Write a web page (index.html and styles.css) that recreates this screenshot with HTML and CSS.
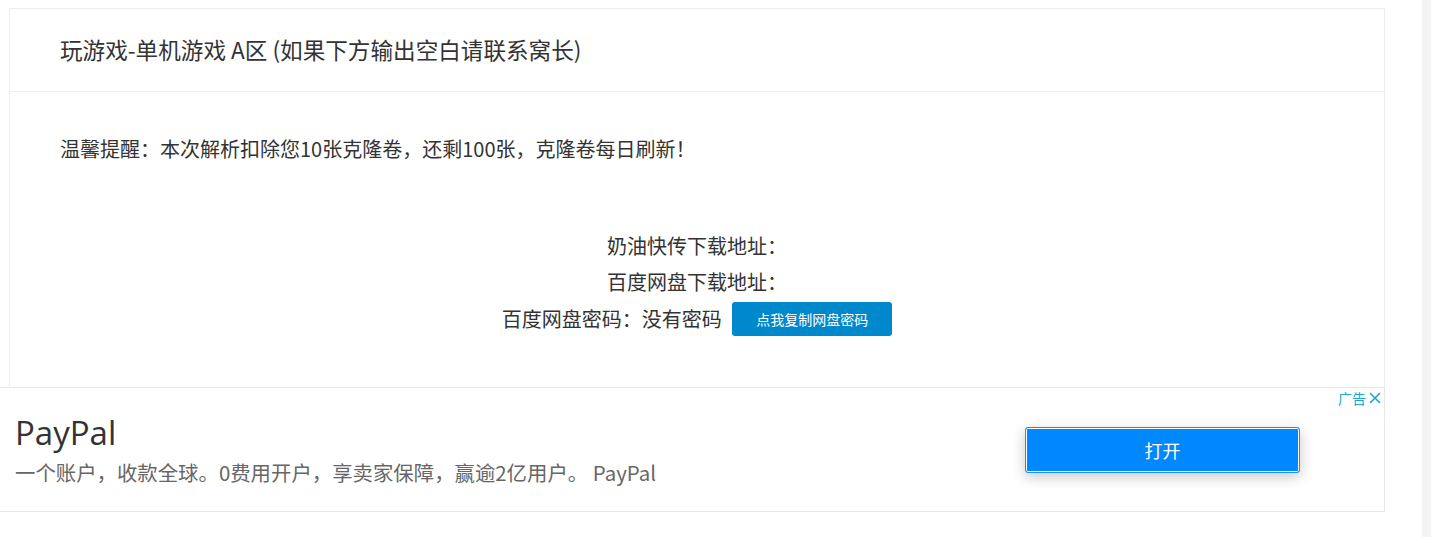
FILE: index.html
```html
<!DOCTYPE html>
<html lang="zh-CN">
  <head>
    <meta charset="UTF-8" />
    <meta name="viewport" content="width=device-width, initial-scale=1.0" />
    <title>玩游戏-单机游戏 A区</title>
    <link rel="stylesheet" href="styles.css">
  </head>

  <body>
    <div class="page">
      <div class="main">
        <div class="card">
          <div class="card-head">
            <h3 class="title">玩游戏-单机游戏 A区 (如果下方输出空白请联系窝长)</h3>
          </div>
          <div class="card-body">
            <p class="tip">温馨提醒：本次解析扣除您10张克隆卷，还剩100张，克隆卷每日刷新！</p>
            <div class="links">
              <div class="line">奶油快传下载地址：</div>
              <div class="line">百度网盘下载地址：</div>
              <div class="line">百度网盘密码：没有密码 <button class="copy">点我复制网盘密码</button></div>
            </div>
          </div>
        </div>

        <div class="ad">
          <div class="ad-text">
            <div class="ad-name">PayPal</div>
            <div class="ad-desc">一个账户，收款全球。0费用开户，享卖家保障，赢逾2亿用户。 PayPal</div>
          </div>
          <button class="ad-open">打开</button>
          <div class="ad-label">
            广告
            <svg width="12" height="12" viewBox="0 0 12 12">
              <path d="M1 1L11 11M11 1L1 11" stroke="currentColor" stroke-width="1.6" fill="none" />
            </svg>
          </div>
        </div>
      </div>
      <div class="gutter"></div>
    </div>
  </body>
</html>
```

FILE: styles.css
```css
body {
  margin: 0;
  font-family: "Noto Sans CJK SC", "Noto Sans", sans-serif;
  color: #333;
  background: #fff;
}

.page {
  display: flex;
  min-height: 100vh;
}

.main {
  width: 1385px;
  padding-top: 8px;
}

.gutter {
  width: 9px;
  margin-left: auto;
  background-color: #f4f4f4;
}

.card {
  margin-left: 9px;
  border: 1px solid #eee;
  border-bottom: none;
}

.card-head {
  height: 82px;
  display: flex;
  align-items: center;
  padding-left: 50px;
  border-bottom: 1px solid #eee;
}

.title {
  margin: 0;
  font-size: 22.6px;
  line-height: 30px;
  font-weight: normal;
}

.card-body {
  padding: 42px 50px 50px;
}

.tip {
  margin: 0;
  font-size: 20px;
  line-height: 30px;
}

.links {
  margin-top: 64px;
  text-align: center;
  font-size: 20px;
}

.line {
  line-height: 36px;
  height: 36px;
}

.line:last-child {
  line-height: 37px;
  height: 37px;
}

.copy {
  margin-left: 6px;
  width: 160px;
  height: 34px;
  border: none;
  border-radius: 3px;
  background-color: #0088cc;
  color: #fff;
  font-family: inherit;
  font-size: 14px;
  vertical-align: 2px;
}

.ad {
  position: relative;
  height: 123px;
  display: flex;
  align-items: center;
  justify-content: space-between;
  padding: 0 84px 0 15px;
  border: 1px solid #e6e6e6;
  border-left: none;
}

.ad-name {
  font-family: "Open Sans", sans-serif;
  font-size: 33px;
  line-height: 40px;
  color: #333;
}

.ad-desc {
  margin-top: 5px;
  font-size: 20.4px;
  line-height: 28px;
  color: #666;
}

.ad-open {
  width: 275px;
  height: 46px;
  border: 1px solid #1a90ff;
  border-radius: 3px;
  box-shadow: inset 0 0 0 1px #fff, 0 4px 14px rgba(0, 0, 0, 0.22);
  background-color: #0088ff;
  color: #fff;
  font-family: inherit;
  font-size: 18px;
}

.ad-label {
  position: absolute;
  top: 0;
  right: 3px;
  display: flex;
  align-items: center;
  gap: 3px;
  font-size: 14px;
  color: #1ba6d4;
}
```
